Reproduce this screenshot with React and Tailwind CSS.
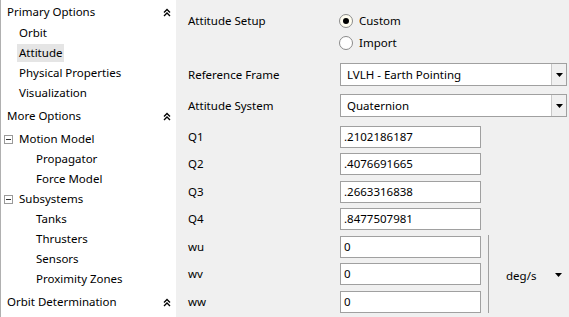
const Chevrons = () => (
  <svg width="8" height="9" viewBox="0 0 8 9" className="mr-[5px]">
    <path d="M1 4.5 L4 1.5 L7 4.5 M1 8 L4 5 L7 8" fill="none" stroke="#000" strokeWidth="1.4" />
  </svg>
);

const Minus = () => (
  <span className="mr-[6px] flex h-[9px] w-[9px] items-center justify-center border border-[#9a9a9a] bg-white">
    <span className="h-px w-[5px] bg-[#333]" />
  </span>
);

const Arrow = () => (
  <svg width="7" height="4" viewBox="0 0 7 4">
    <path d="M0 0 L7 0 L3.5 4 Z" fill="#000" />
  </svg>
);

const Header = ({ label, first }) => (
  <div className={`flex items-center justify-between pl-[6px] ${first ? 'h-[22px]' : 'h-[26px]'}`}>
    <span>{label}</span>
    <Chevrons />
  </div>
);

const Item = ({ label, selected, indent }) => (
  <div className={`flex h-5 items-center ${indent ? 'pl-[33px]' : 'pl-4'}`}>
    <span className={`px-[2px] leading-[18px] ${selected ? 'bg-[#e5e5e5]' : ''}`}>{label}</span>
  </div>
);

const Group = ({ label }) => (
  <div className="flex h-5 items-center pl-[3px]">
    <Minus />
    <span>{label}</span>
  </div>
);

const Radio = ({ label, checked }) => (
  <div className="flex h-[22px] items-center">
    <span
      className={`mr-[6px] flex h-[14px] w-[14px] items-center justify-center rounded-full border border-[#8a8a8a] ${
        checked ? 'bg-[#fffdf0]' : 'bg-white'
      }`}
    >
      {checked && <span className="h-[6px] w-[6px] rounded-full bg-black" />}
    </span>
    <span>{label}</span>
  </div>
);

const Select = ({ value }) => (
  <div className="flex h-[23px] w-[227px] border border-[#a0a0a0] bg-white">
    <div className="flex flex-1 items-center pl-[6px]">{value}</div>
    <div className="flex w-[15px] items-center justify-center border-l border-[#c8c8c8] bg-[#f0f0f0]">
      <Arrow />
    </div>
  </div>
);

const Field = ({ label, value }) => (
  <div className="mt-[5.5px] flex h-[22px] items-center">
    <span className="w-[152px]">{label}</span>
    <div className="flex h-[22px] w-[141px] items-center border border-[#a0a0a0] bg-white pl-[3px]">{value}</div>
  </div>
);

export default function App() {
  return (
    <div
      className="flex h-[317px] w-[569px] overflow-hidden text-[11.5px] text-black"
      style={{ fontFamily: '"Noto Sans", "Open Sans", sans-serif' }}
    >
      <aside className="w-[176px] shrink-0 border-l border-[#b0b0b0] bg-white pt-px">
        <Header label="Primary Options" first />
        <Item label="Orbit" />
        <Item label="Attitude" selected />
        <Item label="Physical Properties" />
        <Item label="Visualization" />
        <Header label="More Options" />
        <Group label="Motion Model" />
        <Item label="Propagator" indent />
        <Item label="Force Model" indent />
        <Group label="Subsystems" />
        <Item label="Tanks" indent />
        <Item label="Thrusters" indent />
        <Item label="Sensors" indent />
        <Item label="Proximity Zones" indent />
        <Header label="Orbit Determination" />
      </aside>

      <main className="flex-1 bg-[#f0f0f0] pl-3 pt-[10px]">
        <div className="flex">
          <span className="flex h-[22px] w-[152px] items-center">Attitude Setup</span>
          <div className="-ml-[1px]">
            <Radio label="Custom" checked />
            <Radio label="Import" />
          </div>
        </div>

        <div className="mt-[9px] flex items-center">
          <span className="w-[152px]">Reference Frame</span>
          <Select value="LVLH - Earth Pointing" />
        </div>
        <div className="mt-[8px] flex items-center">
          <span className="w-[152px]">Attitude System</span>
          <Select value="Quaternion" />
        </div>

        <div className="mt-[8.5px]">
          <Field label="Q1" value=".2102186187" />
          <Field label="Q2" value=".4076691665" />
          <Field label="Q3" value=".2663316838" />
          <Field label="Q4" value=".8477507981" />
        </div>

        <div className="flex">
          <div>
            <Field label="wu" value="0" />
            <Field label="wv" value="0" />
            <Field label="ww" value="0" />
          </div>
          <div className="ml-[7px] mt-[5px] w-px bg-[#a0a0a0]" />
          <div className="flex flex-1 items-center pl-[17px] pt-[8px]">
            <span className="flex-1">deg/s</span>
            <span className="mr-[7px]">
              <Arrow />
            </span>
          </div>
        </div>
      </main>
    </div>
  );
}
